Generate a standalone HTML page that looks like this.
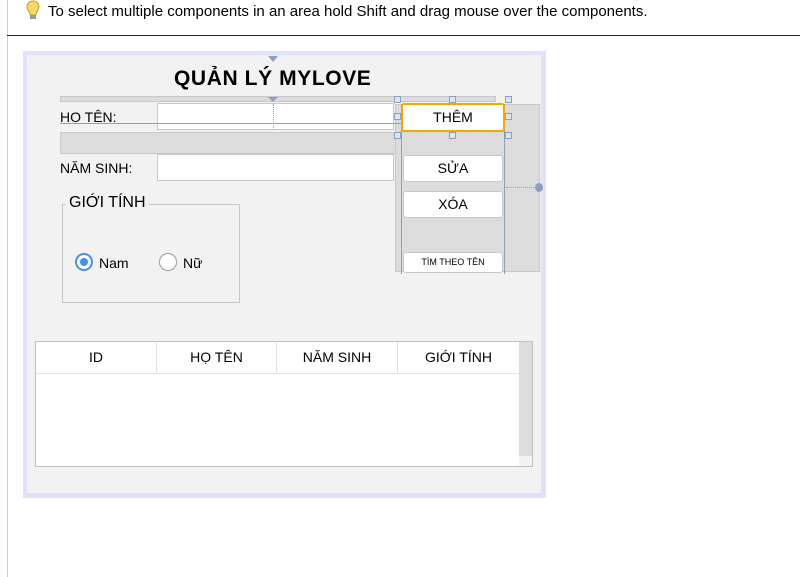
<!DOCTYPE html>
<html><head><meta charset="utf-8"><style>
*{margin:0;padding:0;box-sizing:border-box}
body{width:800px;height:577px;background:#fff;position:relative;overflow:hidden;font-family:"Liberation Sans","DejaVu Sans",sans-serif;color:#000}
.a{position:absolute}
.t{font-size:14px;white-space:nowrap}
.fld{position:absolute;background:#fff;border:1px solid #c8c8c8}
.btn{position:absolute;background:#fff;border:1px solid #c8c8c8;border-radius:3px;font-size:14px;text-align:center}
.h{position:absolute;width:7px;height:7px;background:#dde6f0;border:1px solid #8aa2bd}
.th{position:absolute;top:0;height:31px;line-height:31px;text-align:center;font-size:14px;border-right:1px solid #e2e2e2}
</style></head><body>
<div class="a" style="left:7px;top:0;width:1px;height:577px;background:#ccc"></div>
<svg class="a" style="left:25px;top:0" width="16" height="22" viewBox="0 0 16 22"><path d="M8 1C4 1 2 4 2 7c0 3 3 5 3 8h6c0-3 3-5 3-8 0-3-2-6-6-6z" fill="#f5d76e" stroke="#c8a020"/><rect x="5" y="15" width="6" height="4" fill="#999"/></svg>
<div class="a t" style="left:48px;top:3px;font-size:15px">To select multiple components in an area hold Shift and drag mouse over the components.</div>
<div class="a" style="left:7px;top:35px;width:793px;height:1px;background:#222"></div>

<div class="a" style="left:23px;top:51px;width:523px;height:447px;background:#e1e1fc"></div>
<div class="a" style="left:27px;top:55px;width:514px;height:438px;background:#f2f2f2"></div>
<div class="a" style="left:268px;top:56px;width:10px;height:6px;background:#8aa2bd;clip-path:polygon(0 0,100% 0,50% 100%)"></div>
<div class="a" style="left:174px;top:67px;font-size:21px;font-weight:bold;letter-spacing:0.6px">QUẢN LÝ MYLOVE</div>

<div class="a" style="left:60px;top:96px;width:436px;height:6px;background:#dcdcdc;border:1px solid #c8c8c8"></div>
<div class="a" style="left:60px;top:132px;width:436px;height:22px;background:#dcdcdc;border:1px solid #c8c8c8"></div>
<div class="a" style="left:395px;top:104px;width:145px;height:168px;background:#dcdcdc;border:1px solid #c8c8c8"></div>
<div class="a" style="left:268px;top:97px;width:10px;height:5px;background:#8aa2bd;clip-path:polygon(0 0,100% 0,50% 100%)"></div>

<div class="a t" style="left:60px;top:109px">HỌ TÊN:</div>
<div class="fld" style="left:157px;top:103px;width:237px;height:27px"></div>
<div class="a" style="left:273px;top:104px;width:0;height:26px;border-left:1px dotted #8aa2bd"></div>
<div class="a" style="left:60px;top:123px;width:343px;height:1px;background:#8aa2bd"></div>
<div class="a t" style="left:60px;top:160px">NĂM SINH:</div>
<div class="fld" style="left:157px;top:154px;width:237px;height:27px"></div>

<div class="a" style="left:401px;top:104px;width:1px;height:170px;background:#8aa2bd"></div>
<div class="a" style="left:504px;top:104px;width:1px;height:170px;background:#8aa2bd"></div>
<div class="a" style="left:506px;top:187px;width:32px;border-top:1px dotted #8aa2bd"></div>
<div class="a" style="left:535px;top:183px;width:8px;height:9px;border-radius:50%;background:#8aa2bd"></div>

<div class="btn" style="left:401px;top:103px;width:104px;height:29px;border:2px solid #f5a800;line-height:25px">THÊM</div>
<div class="btn" style="left:403px;top:155px;width:100px;height:27px;line-height:25px">SỬA</div>
<div class="btn" style="left:403px;top:191px;width:100px;height:27px;line-height:25px">XÓA</div>
<div class="btn" style="left:403px;top:252px;width:100px;height:21px;line-height:19px;font-size:9px">TÌM THEO TÊN</div>
<div class="h" style="left:394px;top:96px"></div><div class="h" style="left:449px;top:96px"></div><div class="h" style="left:505px;top:96px"></div>
<div class="h" style="left:394px;top:113px"></div><div class="h" style="left:505px;top:113px"></div>
<div class="h" style="left:394px;top:132px"></div><div class="h" style="left:449px;top:132px"></div><div class="h" style="left:505px;top:132px"></div>

<div class="a" style="left:62px;top:204px;width:178px;height:99px;border:1px solid #c8c8c8"></div>
<div class="a" style="left:66px;top:194px;padding:0 3px;background:#f2f2f2;font-size:16px">GIỚI TÍNH</div>
<div class="a" style="left:75px;top:253px;width:18px;height:18px;border-radius:50%;border:2px solid #4a90e2;background:#fff"></div>
<div class="a" style="left:80px;top:258px;width:8px;height:8px;border-radius:50%;background:#4a90e2"></div>
<div class="a t" style="left:99px;top:255px">Nam</div>
<div class="a" style="left:159px;top:253px;width:18px;height:18px;border-radius:50%;border:1px solid #999;background:#fff"></div>
<div class="a t" style="left:183px;top:255px">Nữ</div>

<div class="a" style="left:35px;top:341px;width:498px;height:126px;background:#fff;border:1px solid #c0c0c0">
 <div class="th" style="left:0;width:121px">ID</div>
 <div class="th" style="left:121px;width:120px">HỌ TÊN</div>
 <div class="th" style="left:241px;width:121px">NĂM SINH</div>
 <div class="th" style="left:362px;width:121px;border-right:none">GIỚI TÍNH</div>
 <div class="a" style="left:0;top:31px;width:483px;height:1px;background:#e2e2e2"></div>
 <div class="a" style="left:483px;top:0;width:13px;height:114px;background:#dcdcdc"></div>
 <div class="a" style="left:483px;top:114px;width:13px;height:10px;background:#f2f2f2"></div>
</div>
</body></html>
